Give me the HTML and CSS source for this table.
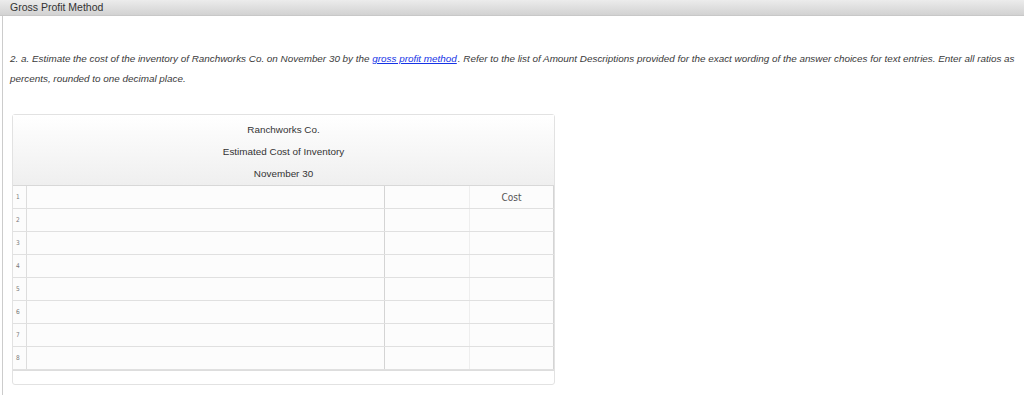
FILE: index.html
```html
<!DOCTYPE html>
<html lang="en">
<head>
    <meta charset="UTF-8">
    <meta name="viewport" content="width=device-width, initial-scale=1.0">
    <title>Gross Profit Method</title>
    <link rel="stylesheet" href="styles.css">
</head>
<body>
    <div class="titlebar">Gross Profit Method</div>

    <div class="panel">
        <p class="question">2. a. Estimate the cost of the inventory of Ranchworks Co. on November 30 by the <a href="#">gross profit method</a>. Refer to the list of Amount Descriptions provided for the exact wording of the answer choices for text entries. Enter all ratios as percents, rounded to one decimal place.</p>

        <div class="sheet">
            <div class="sheet-head">
                <div>Ranchworks Co.</div>
                <div>Estimated Cost of Inventory</div>
                <div>November 30</div>
            </div>
            <table class="grid">
                <tr><td class="num">1</td><td class="label"></td><td class="amt"></td><td class="cost head">Cost</td></tr>
                <tr><td class="num">2</td><td class="label"></td><td class="amt"></td><td class="cost"></td></tr>
                <tr><td class="num">3</td><td class="label"></td><td class="amt"></td><td class="cost"></td></tr>
                <tr><td class="num">4</td><td class="label"></td><td class="amt"></td><td class="cost"></td></tr>
                <tr><td class="num">5</td><td class="label"></td><td class="amt"></td><td class="cost"></td></tr>
                <tr><td class="num">6</td><td class="label"></td><td class="amt"></td><td class="cost"></td></tr>
                <tr><td class="num">7</td><td class="label"></td><td class="amt"></td><td class="cost"></td></tr>
                <tr><td class="num">8</td><td class="label"></td><td class="amt"></td><td class="cost"></td></tr>
            </table>
            <div class="sheet-foot"></div>
        </div>
    </div>
</body>
</html>
```

FILE: styles.css
```css
body { margin: 0; font-family: "Liberation Sans", Arial, sans-serif; color: #333; background: #fff; }
.titlebar { height: 16px; line-height: 15px; padding-left: 10px; font-size: 10.5px; color: #333; background: linear-gradient(#ececec, #d2d2d2); border-bottom: 1px solid #c8c8c8; box-sizing: border-box; }
.panel { margin-left: 2px; border-left: 1px solid #ccc; padding: 33px 8px 12px 7px; height: 379px; box-sizing: border-box; }
.question { margin: 0; font-size: 9.9px; font-style: italic; line-height: 20px; color: #3a3a3a; }
.question a { color: #1533e6; padding-right: 1px; }
.sheet { width: 541px; margin: 25px 0 0 2px; border: 1px solid #e2e2e2; border-radius: 3px; background: #fff; }
.sheet-head { height: 71px; padding-top: 4px; box-sizing: border-box; text-align: center; font-size: 9.9px; line-height: 22px; color: #333; background: linear-gradient(#ffffff, #efefef); border-bottom: 1px solid #d8d8d8; }
.grid { width: 100%; border-collapse: collapse; }
.grid td { height: 22px; padding: 0; border-bottom: 1px solid #e0e0e0; background: #fcfcfc; }
.grid .num { width: 10px; padding-left: 3px; font-size: 6.5px; color: #777; font-family: "DejaVu Sans Condensed", sans-serif; border-right: 1px solid #ddd; }
.grid .label { width: 357px; border-left: 1px solid #eee; }
.grid .amt { width: 84px; border-left: 1px solid #d4d4d4; }
.grid .cost { border-left: 1px solid #eee; border-right: 1px solid #d4d4d4; }
.grid .head { text-align: center; font-family: "DejaVu Sans Condensed", sans-serif; font-stretch: condensed; font-size: 10px; color: #555; }
.sheet-foot { height: 13px; border-top: 1px solid #ddd; }
```
